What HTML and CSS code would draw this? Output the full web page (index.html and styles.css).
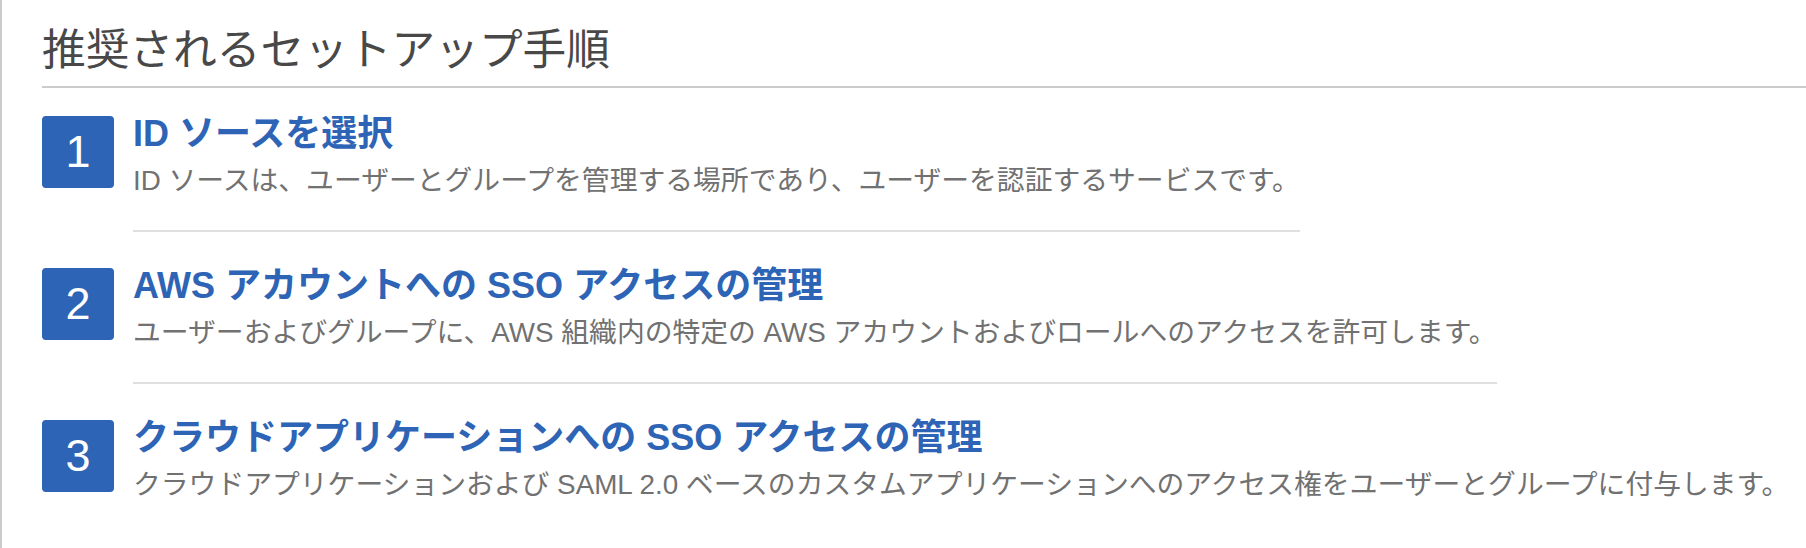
FILE: index.html
```html
<!DOCTYPE html>
<html lang="ja">
<head>
<meta charset="utf-8">
<link rel="stylesheet" href="styles.css">
</head>
<body>
<div class="panel">
  <h2 class="heading">推奨されるセットアップ手順</h2>
  <ol class="steps">
    <li class="step">
      <div class="badge">1</div>
      <div class="step-body">
        <div class="step-title">ID ソースを選択</div>
        <div class="step-desc">ID ソースは、ユーザーとグループを管理する場所であり、ユーザーを認証するサービスです。</div>
      </div>
    </li>
    <li class="step">
      <div class="badge">2</div>
      <div class="step-body">
        <div class="step-title">AWS アカウントへの SSO アクセスの管理</div>
        <div class="step-desc">ユーザーおよびグループに、AWS 組織内の特定の AWS アカウントおよびロールへのアクセスを許可します。</div>
      </div>
    </li>
    <li class="step">
      <div class="badge">3</div>
      <div class="step-body">
        <div class="step-title">クラウドアプリケーションへの SSO アクセスの管理</div>
        <div class="step-desc">クラウドアプリケーションおよび SAML 2.0 ベースのカスタムアプリケーションへのアクセス権をユーザーとグループに付与します。</div>
      </div>
    </li>
  </ol>
</div>
</body>
</html>
```

FILE: styles.css
```css
html, body {
  margin: 0;
  padding: 0;
  background: #ffffff;
}

body {
  font-family: "Liberation Sans", "Noto Sans CJK JP", sans-serif;
}

.panel {
  min-height: 548px;
  box-sizing: border-box;
  border-left: 2px solid #cccccc;
  padding-left: 40px;
}

.heading {
  margin: 0;
  padding: 24px 0 10px 0;
  font-size: 43.7px;
  line-height: 52px;
  font-weight: normal;
  color: #484848;
  border-bottom: 2px solid #cccccc;
}

.steps {
  list-style: none;
  margin: 28px 0 0 0;
  padding: 0;
  display: flex;
  flex-direction: column;
  gap: 36px;
}

.step {
  display: flex;
  align-items: flex-start;
  gap: 19px;
}

.badge {
  flex: 0 0 auto;
  width: 72px;
  height: 72px;
  border-radius: 4px;
  background: #2e64b5;
  color: #ffffff;
  font-size: 45px;
  line-height: 72px;
  text-align: center;
}

.step-body {
  padding-bottom: 30px;
  border-bottom: 2px solid #e0e0e0;
}

.step:last-child .step-body {
  border-bottom: none;
}

.step-title {
  font-size: 36px;
  line-height: 36px;
  font-weight: bold;
  color: #2e64b5;
  white-space: nowrap;
}

.step-desc {
  margin-top: 10px;
  font-size: 27.8px;
  line-height: 38px;
  color: #717171;
  white-space: nowrap;
}
```
